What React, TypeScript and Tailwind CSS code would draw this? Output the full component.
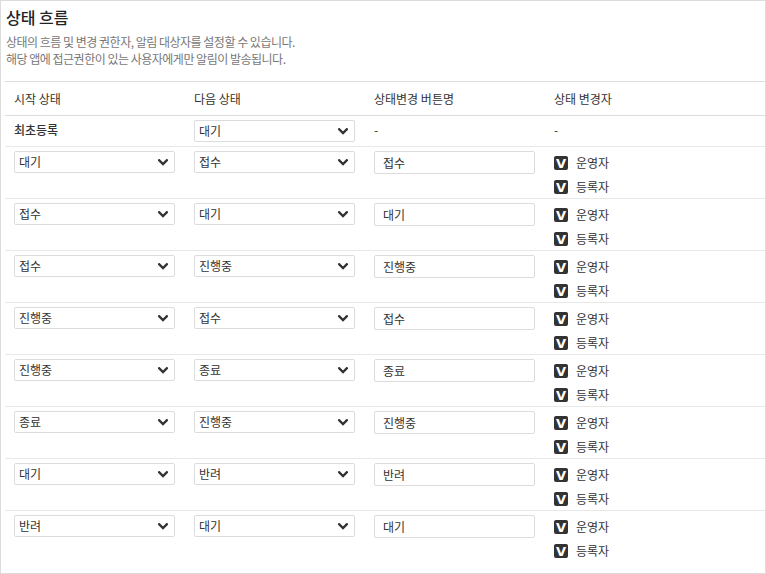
import React from "react";

const rows: [string, string, string][] = [
  ["대기", "접수", "접수"],
  ["접수", "대기", "대기"],
  ["접수", "진행중", "진행중"],
  ["진행중", "접수", "접수"],
  ["진행중", "종료", "종료"],
  ["종료", "진행중", "진행중"],
  ["대기", "반려", "반려"],
  ["반려", "대기", "대기"],
];

function Chevron() {
  return (
    <svg width="10" height="7" viewBox="0 0 10 7" className="shrink-0">
      <polyline points="1.2,1.3 5,5 8.8,1.3" fill="none" stroke="#333" strokeWidth="2.4" strokeLinecap="square" />
    </svg>
  );
}

function Select({ value }: { value: string }) {
  return (
    <div className="flex h-[22px] w-[161px] items-center justify-between rounded-[2px] border border-[#dcdcdc] bg-white pl-[4px] pr-[6px] text-[12px] text-[#333]">
      <span>{value}</span>
      <Chevron />
    </div>
  );
}

function Input({ value }: { value: string }) {
  return (
    <div className="flex h-[23px] w-[161px] items-center rounded-[2px] border border-[#dcdcdc] bg-white pl-[8px] text-[12px] text-[#333]">
      {value}
    </div>
  );
}

function Check({ label }: { label: string }) {
  return (
    <div className="flex h-[24px] items-center gap-[8px]">
      <span
        className="flex h-[14px] w-[14px] items-center justify-center rounded-[2px] bg-[#333] pt-[1px] text-[13px] font-black leading-none text-white"
        style={{ fontFamily: "'DejaVu Sans', sans-serif" }}
      >
        V
      </span>
      <span className="text-[12px] text-[#333]">{label}</span>
    </div>
  );
}

export default function App() {
  return (
    <div
      className="box-border h-[574px] w-[766px] border border-[#dcdcdc] bg-white pl-[4px]"
      style={{ fontFamily: "'Noto Sans CJK KR', 'Noto Sans', sans-serif" }}
    >
      <div className="pl-[1px] pt-[5px] text-[16px] font-medium leading-[22px] text-[#222]">상태 흐름</div>
      <div className="mt-[5px] pl-[1px] text-[12px] leading-[17px] tracking-[-0.5px] text-[#777]">
        <div>상태의 흐름 및 변경 권한자, 알림 대상자를 설정할 수 있습니다.</div>
        <div>해당 앱에 접근권한이 있는 사용자에게만 알림이 발송됩니다.</div>
      </div>
      <div className="mt-[14px] border-t border-[#dcdcdc]">
        <div className="grid h-[34px] grid-cols-[180px_180px_180px_1fr] items-center border-b border-[#dcdcdc] text-[12px] text-[#333]">
          <div className="pl-[9px]">시작 상태</div>
          <div className="pl-[9px]">다음 상태</div>
          <div className="pl-[9px]">상태변경 버튼명</div>
          <div className="pl-[9px]">상태 변경자</div>
        </div>
        <div className="grid h-[31px] grid-cols-[180px_180px_180px_1fr] items-center border-b border-[#e8e8e8] text-[12px] text-[#333]">
          <div className="pl-[9px] pb-[3px] font-medium">최초등록</div>
          <div className="pl-[9px]">
            <Select value="대기" />
          </div>
          <div className="pl-[9px] pb-[3px]">-</div>
          <div className="pl-[9px] pb-[3px]">-</div>
        </div>
        {rows.map((r, i) => (
          <div
            key={i}
            className={`grid h-[52px] grid-cols-[180px_180px_180px_1fr] items-start pt-[4px] ${i < rows.length - 1 ? "border-b border-[#e8e8e8]" : ""}`}
          >
            <div className="pl-[9px]">
              <Select value={r[0]} />
            </div>
            <div className="pl-[9px]">
              <Select value={r[1]} />
            </div>
            <div className="pl-[9px]">
              <Input value={r[2]} />
            </div>
            <div className="pl-[9px]">
              <Check label="운영자" />
              <Check label="등록자" />
            </div>
          </div>
        ))}
      </div>
    </div>
  );
}
